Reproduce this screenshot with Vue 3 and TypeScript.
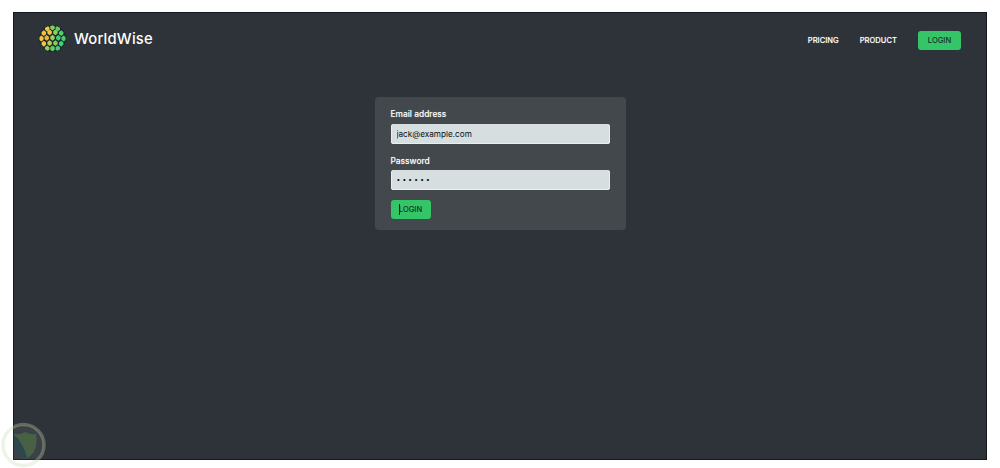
<script setup lang="ts">
type Cell = { x: number; y: number; c: string }
const rows: Cell[] = [
  { x: 8.5, y: 3.6, c: '#f5c244' },
  { x: 14, y: 2.6, c: '#7fd05a' },
  { x: 19.5, y: 3.6, c: '#62cf63' },
  { x: 5, y: 8.4, c: '#f5c244' },
  { x: 11, y: 7.6, c: '#f5c244' },
  { x: 17, y: 7.6, c: '#8ad257' },
  { x: 23, y: 8.4, c: '#55cd6b' },
  { x: 2.4, y: 14, c: '#f5c244' },
  { x: 8, y: 13.4, c: '#f0ae3f' },
  { x: 14, y: 13.2, c: '#9dd050' },
  { x: 20, y: 13.4, c: '#3fcf78' },
  { x: 25.6, y: 14, c: '#46cc72' },
  { x: 5, y: 19.4, c: '#f5c244' },
  { x: 11, y: 18.8, c: '#b5d14c' },
  { x: 17, y: 18.8, c: '#7ad05b' },
  { x: 23, y: 19.4, c: '#3fcf78' },
  { x: 8.5, y: 24.2, c: '#8fd256' },
  { x: 14, y: 24.4, c: '#62cf63' },
  { x: 19.5, y: 24.2, c: '#3fcf78' },
]
const cellPath = (cell: Cell): string => {
  const hw = 2.3
  const hh = 3.05
  const sh = 1.2
  const { x, y } = cell
  return `M${x} ${y - hh}L${x + hw} ${y - sh}L${x + hw} ${y + sh}L${x} ${y + hh}L${x - hw} ${y + sh}L${x - hw} ${y - sh}Z`
}
</script>

<template>
  <div class="page">
    <main class="shell">
      <nav class="nav">
        <a class="brand">
          <svg class="logo" viewBox="0 0 28 28" aria-hidden="true">
            <defs>
              <clipPath id="globe"><circle cx="14" cy="14" r="13.6" /></clipPath>
            </defs>
            <circle cx="14" cy="14" r="14" fill="#1c2a2a" />
            <g clip-path="url(#globe)">
              <path v-for="(cell, i) in rows" :key="i" :d="cellPath(cell)" :fill="cell.c" />
            </g>
          </svg>
          <span class="brand-name">WorldWise</span>
        </a>
        <ul class="links">
          <li>PRICING</li>
          <li>PRODUCT</li>
          <li class="nav-cta">LOGIN</li>
        </ul>
      </nav>
      <form class="card" @submit.prevent>
        <div class="field">
          <label for="email">Email address</label>
          <input id="email" type="email" value="jack@example.com" />
        </div>
        <div class="field">
          <label for="password">Password</label>
          <input id="password" class="secret" type="password" value="qwerty" />
        </div>
        <div class="actions"><button type="submit"><i class="caret"></i>LOGIN</button></div>
      </form>
    </main>
    <svg class="watermark" viewBox="0 0 46 46" aria-hidden="true">
      <circle cx="23.5" cy="23" r="20.5" fill="#ffffff" fill-opacity=".07" stroke="#c9dcae" stroke-opacity=".32" stroke-width="3.5" />
      <path d="M14 12 Q20 13 25 10 Q31 13 36 12 Q38 24 33 31 Q29 36 25 37 Q17 33 15 26 Z" fill="#4f6f45" fill-opacity=".7" />
      <path d="M14 13 Q22 19 27 35 L25 37 Q17 33 15 26 Z" fill="#2a4250" fill-opacity=".85" />
    </svg>
  </div>
</template>

<style>
html, body { background: #fff; }
</style>

<style scoped>
.page {
  position: relative;
  width: 1000px;
  height: 468px;
  box-sizing: border-box;
  padding: 12px 13px 8px;
  overflow: hidden;
  background: #fff;
  font-family: Inter, "Liberation Sans", sans-serif;
}
.shell {
  box-sizing: border-box;
  height: 100%;
  border: 1px solid #14171a;
  background: #2d3339;
  display: flex;
  flex-direction: column;
  align-items: center;
}
.nav {
  box-sizing: border-box;
  width: 100%;
  height: 84px;
  padding: 12px 25px 0;
  display: flex;
  align-items: flex-start;
  justify-content: space-between;
}
.brand { display: flex; align-items: center; gap: 8px; }
.logo { width: 27px; height: 27px; display: block; }
.brand-name {
  color: #fff;
  font-size: 14.8px;
  font-weight: 500;
  letter-spacing: .2px;
}
.links {
  list-style: none;
  margin: 6px 0 0;
  padding: 0;
  display: flex;
  align-items: center;
  gap: 21px;
  color: #fff;
  font-size: 7.6px;
  font-weight: 500;
  text-shadow: 0 0 1px rgba(255, 255, 255, .4);
}
.nav-cta {
  box-sizing: border-box;
  width: 43px;
  height: 19px;
  display: flex;
  align-items: center;
  justify-content: center;
  border-radius: 3px;
  background: #34c568;
  color: #173024;
  text-shadow: none;
}
.card {
  box-sizing: border-box;
  width: 251px;
  height: 133px;
  padding: 11px 16px 0;
  border-radius: 4px;
  background: #42484b;
  display: flex;
  flex-direction: column;
}
.field { display: flex; flex-direction: column; margin-bottom: 10px; }
label {
  color: #fff;
  font-size: 8.4px;
  font-weight: 500;
  line-height: 12px;
  margin-bottom: 4px;
  text-shadow: 0 0 1px rgba(255, 255, 255, .35);
}
.field + .field label { margin-top: 1px; margin-bottom: 3px; }
input {
  box-sizing: border-box;
  width: 219px;
  height: 20px;
  padding: 0 6px;
  border: 0;
  outline: 0;
  border-radius: 3px;
  background: #d6dee0;
  color: #0b0f11;
  font: 8.2px Inter, "Liberation Sans", sans-serif;
  box-shadow: inset 0 -1px #e9eeee, inset 1px 0 #e9eeee, inset -1px 0 #e9eeee;
}
.secret { font-size: 6.6px; letter-spacing: 2.2px; }
.actions { display: flex; }
button {
  position: relative;
  box-sizing: border-box;
  width: 40px;
  height: 19px;
  padding: 0;
  border: 0;
  border-radius: 3px;
  background: #34c568;
  color: #173024;
  font: 500 7.6px Inter, "Liberation Sans", sans-serif;
}
.caret {
  position: absolute;
  left: 8px;
  top: 4px;
  width: 1px;
  height: 11px;
  background: #14251c;
}
.watermark {
  position: absolute;
  left: 0;
  top: 422px;
  width: 46px;
  height: 46px;
  filter: blur(.6px);
}
</style>
